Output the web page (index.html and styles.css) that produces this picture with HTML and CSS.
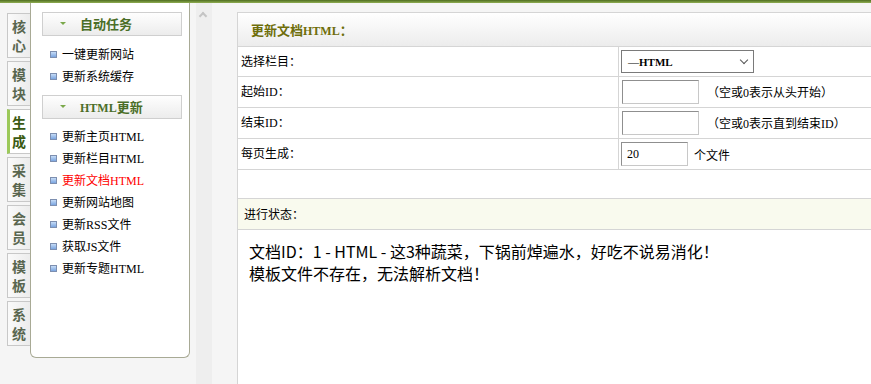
FILE: index.html
```html
<!DOCTYPE html>
<html lang="zh-CN">
<head>
  <meta charset="UTF-8">
  <title>更新文档HTML</title>
  <link rel="stylesheet" href="styles.css">
</head>
<body>
  <div class="topbar"></div>
  <div class="layout">
    <!-- 左侧竖排标签 -->
    <div class="tabs">
      <div class="tab">核<br>心</div>
      <div class="tab">模<br>块</div>
      <div class="tab active">生<br>成</div>
      <div class="tab">采<br>集</div>
      <div class="tab">会<br>员</div>
      <div class="tab">模<br>板</div>
      <div class="tab">系<br>统</div>
    </div>

    <!-- 菜单 -->
    <div class="menu">
      <div class="menu-head"><span class="arrow"></span>自动任务</div>
      <ul class="menu-list first">
        <li>一键更新网站</li>
        <li>更新系统缓存</li>
      </ul>
      <div class="menu-head"><span class="arrow"></span><b class="en">HTML</b>更新</div>
      <ul class="menu-list">
        <li>更新主页<span class="en">HTML</span></li>
        <li>更新栏目<span class="en">HTML</span></li>
        <li class="current">更新文档<span class="en">HTML</span></li>
        <li>更新网站地图</li>
        <li>更新<span class="en">RSS</span>文件</li>
        <li>获取<span class="en">JS</span>文件</li>
        <li>更新专题<span class="en">HTML</span></li>
      </ul>
    </div>

    <div class="scroller"><span class="up"></span></div>

    <!-- 主体 -->
    <div class="main">
      <div class="main-head">更新文档<b class="en">HTML</b>：</div>
      <div class="row first">
        <div class="label">选择栏目：</div>
        <div class="field">
          <div class="select"><span class="en">—HTML</span><span class="chev"></span></div>
        </div>
      </div>
      <div class="row">
        <div class="label">起始<span class="en">ID</span>：</div>
        <div class="field"><span class="input"></span><span class="hint">（空或<span class="en">0</span>表示从头开始）</span></div>
      </div>
      <div class="row">
        <div class="label">结束<span class="en">ID</span>：</div>
        <div class="field"><span class="input"></span><span class="hint">（空或<span class="en">0</span>表示直到结束<span class="en">ID</span>）</span></div>
      </div>
      <div class="row">
        <div class="label">每页生成：</div>
        <div class="field"><span class="input small en">20</span><span class="unit">个文件</span></div>
      </div>
      <div class="blank"></div>
      <div class="status-head">进行状态：</div>
      <div class="status">
        文档ID：1 - HTML - 这3种蔬菜，下锅前焯遍水，好吃不说易消化！<br>
        模板文件不存在，无法解析文档！
      </div>
    </div>
  </div>
</body>
</html>
```

FILE: styles.css
```css
/* 基础 */
* { box-sizing: border-box; margin: 0; padding: 0; }
body { font-family: "Noto Sans CJK SC", sans-serif; font-size: 12px; color: #000; background: #f5f5f5; height: 384px; overflow: hidden; }
.en { font-family: "Liberation Serif", serif; }

.topbar { height: 3px; background: linear-gradient(#4f6d20, #8fae52); }
.layout { display: flex; height: 381px; }

/* 竖排标签 */
.tabs { width: 30px; padding: 10px 0 0 7px; display: flex; flex-direction: column; gap: 3px; }
.tab {
  height: 45px; border: 1px solid #c8c8c8; border-right: none;
  background: linear-gradient(90deg, #fafafa, #ececec);
  font-size: 14px; font-weight: bold; line-height: 19px; color: #59664f;
  text-align: center; padding-top: 3px;
}
.tab.active { border-left: 3px solid #9cc95a; background: #fff; color: #3b5a12; padding-right: 2px; }

/* 菜单 */
.menu {
  width: 160px; height: 355px; background: #fff;
  border: 1px solid #a8aa95; border-top: none; border-radius: 0 0 6px 6px;
  padding: 9px 7px 0 11px;
}
.menu-head {
  height: 24px; border: 1px solid #cfcfcf; background: linear-gradient(#fefefe, #ececec);
  font-size: 13px; font-weight: bold; color: #4a6e28; line-height: 22px; padding-left: 17px;
}
.menu-head .en { font-size: 12px; }
.arrow { display: inline-block; width: 0; height: 0; border: 3px solid transparent; border-top: 3px solid #7aa84a; margin: 0 14px 0 0; vertical-align: 1px; }
.menu-list { list-style: none; padding: 7px 0 8px 0; }
.menu-list li { height: 22px; line-height: 22px; padding-left: 20px; position: relative; }
.menu-list li::before {
  content: ""; position: absolute; left: 8px; top: 8px; width: 5px; height: 5px;
  border: 1px solid #7d8fb0; background: linear-gradient(#c6dcf7, #7aa5e0);
}
.menu-list:last-child { padding-top: 6px; }
.menu-list li.current { color: #f00; }

/* 滚动条 */
.scroller { width: 16px; margin-left: 6px; background: #eeeeee; position: relative; }
.up { position: absolute; left: 4px; top: 10px; width: 6px; height: 6px; border-left: 2px solid #c4c4c4; border-top: 2px solid #c4c4c4; transform: rotate(45deg); }

/* 主体 */
.main { flex: 1; margin: 9px 0 0 25px; background: #fff; border-left: 1px solid #d5d5d5; border-top: 1px solid #d5d5d5; }
.main-head {
  height: 34px; line-height: 33px; padding-left: 13px;
  background: linear-gradient(#ffffff, #ececec); border-bottom: 1px solid #d5d5d5;
  font-size: 13px; font-weight: bold; color: #6e6e0a;
}
.main-head .en { font-size: 12px; }
.row { display: flex; height: 31px; border-bottom: 1px solid #d5d5d5; }
.row.first { height: 30px; }
.label { width: 381px; border-right: 1px solid #d5d5d5; padding-left: 3px; line-height: 27px; }
.field { flex: 1; display: flex; align-items: center; padding-left: 2px; }
.select {
  width: 133px; height: 23px; border: 1px solid #7a7a7a; display: flex; align-items: center; justify-content: space-between;
  padding: 0 6px 0 6px; font-size: 11px; font-weight: bold;
}
.chev { width: 6px; height: 6px; border-right: 1px solid #555; border-bottom: 1px solid #555; transform: rotate(45deg); margin-top: -4px; }
.input { width: 77px; height: 24px; border: 1px solid #c8c8c8; border-top-color: #8f8f8f; border-left-color: #8f8f8f; margin-left: 1px; }
.input.small { width: 67px; margin-left: 0; padding-left: 5px; line-height: 22px; font-size: 12px; }
.hint { margin-left: 8px; }
.unit { margin-left: 6px; }
.blank { height: 29px; border-bottom: 1px solid #d5d5d5; }
.status-head { height: 31px; line-height: 30px; padding-left: 6px; background: #f9faee; border-bottom: 1px solid #d5d5d5; }
.status { padding: 10px 0 0 11px; font-size: 16px; line-height: 22px; }
```
